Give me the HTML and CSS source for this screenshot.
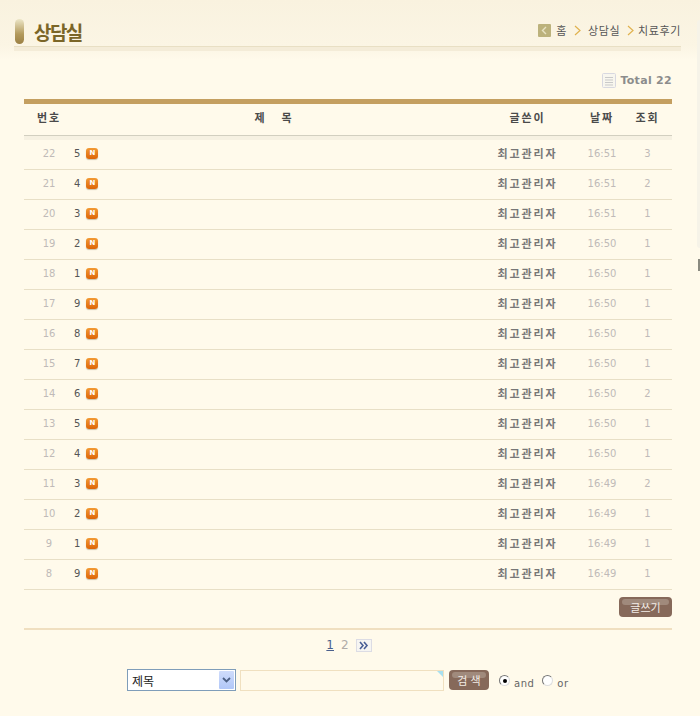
FILE: index.html
```html
<!DOCTYPE html>
<html lang="ko">
<head>
<meta charset="utf-8">
<title>상담실</title>
<link rel="stylesheet" href="styles.css">
</head>
<body>
<div class="page">
  <header class="head">
    <div class="head-left">
      <span class="pill"></span>
      <h1 class="title">상담실</h1>
    </div>
    <nav class="crumbs">
      <svg class="home" width="13" height="13" viewBox="0 0 13 13"><rect width="13" height="13" rx="1" fill="#bcb27c"/><path d="M8 3 L4.500 6.500 L8 10" fill="none" stroke="#e8e3c4" stroke-width="1.400"/></svg>
      <span class="crumb-home">홈</span>
      <svg class="chev" width="7" height="11" viewBox="0 0 7 11"><path d="M1 1 L6 5.500 L1 10" fill="none" stroke="#e0b24e" stroke-width="1.200"/></svg>
      <span class="crumb-mid">상담실</span>
      <svg class="chev" width="7" height="11" viewBox="0 0 7 11"><path d="M1 1 L6 5.500 L1 10" fill="none" stroke="#e0b24e" stroke-width="1.200"/></svg>
      <span class="crumb-last">치료후기</span>
    </nav>
  </header>
  <div class="head-rule"></div>

  <main class="board">
    <div class="total">
      <svg width="14" height="15" viewBox="0 0 14 15"><rect x="0.500" y="0.500" width="13" height="14" rx="1" fill="#f8f6ee" stroke="#d8d8e0"/><path d="M3 4.500h8M3 7h8M3 9.500h8M3 12h8" stroke="#c9c9c9"/></svg>
      <span class="total-text">Total 22</span>
    </div>
    <div class="thead">
      <span class="c-no">번호</span>
      <span class="c-title">제&nbsp;&nbsp;&nbsp;목</span>
      <span class="c-author">글쓴이</span>
      <span class="c-date">날짜</span>
      <span class="c-hit">조회</span>
    </div>
    <div class="tband"></div>
    <div class="rows" id="rows"></div>
    <div class="actions"><a class="btn btn-write"><span class="btn-label">글쓰기</span></a></div>
    <div class="foot-rule"></div>
    <div class="pager">
      <span class="pg-cur">1</span>
      <span class="pg">2</span>
      <svg class="pg-next" width="16" height="13" viewBox="0 0 16 13"><rect x="0.500" y="0.500" width="15" height="12" fill="#f6f5f2" stroke="#dcdce4"/><path d="M4 3l3 3.500-3 3.500M8 3l3 3.500-3 3.500" fill="none" stroke="#4a5f96" stroke-width="1.600"/></svg>
    </div>
    <form class="search">
      <div class="select">
        <span class="select-text">제목</span>
        <span class="select-arrow"><svg width="9" height="6" viewBox="0 0 9 6"><path d="M1 1l3.500 3.500L8 1" fill="none" stroke="#4d6185" stroke-width="1.800"/></svg></span>
      </div>
      <div class="input"><span class="corner"></span></div>
      <a class="btn btn-search"><span class="btn-label">검 색</span></a>
      <label class="radio"><span class="dot on"></span><span class="radio-text">and</span></label>
      <label class="radio"><span class="dot"></span><span class="radio-text">or</span></label>
    </form>
  </main>
  <div class="edge"></div>
  <div class="edge-tick"></div>
</div>
<script src="rows.js"></script>
</body>
</html>
```
FILE: rows.js
```js
var data = [
  [22,5,"16:51",3],[21,4,"16:51",2],[20,3,"16:51",1],[19,2,"16:50",1],[18,1,"16:50",1],
  [17,9,"16:50",1],[16,8,"16:50",1],[15,7,"16:50",1],[14,6,"16:50",2],[13,5,"16:50",1],
  [12,4,"16:50",1],[11,3,"16:49",2],[10,2,"16:49",1],[9,1,"16:49",1],[8,9,"16:49",1]
];
document.getElementById("rows").innerHTML = data.map(function (r) {
  return '<div class="row">' +
    '<span class="c-no num">' + r[0] + '</span>' +
    '<span class="c-title subject"><span class="subj">' + r[1] + '</span><span class="badge">N</span></span>' +
    '<span class="c-author who">최고관리자</span>' +
    '<span class="c-date num">' + r[2] + '</span>' +
    '<span class="c-hit num">' + r[3] + '</span>' +
    '</div>';
}).join("");
```
FILE: styles.css
```css
html, body { margin: 0; padding: 0; }
body {
  background: #fffaeb;
  font-family: "Liberation Sans", "Noto Sans CJK KR", sans-serif;
  font-size: 11px;
  color: #555;
}
.page {
  position: relative;
  width: 700px;
  height: 716px;
  overflow: hidden;
  background: linear-gradient(#f9f2df 0, #fbf5e4 46px, #fffaeb 60px);
}
.head {
  display: flex;
  justify-content: space-between;
  align-items: center;
  box-sizing: border-box;
  height: 46px;
  padding: 18px 20px 1px 15px;
}
.head-left { display: flex; align-items: center; gap: 10px; }
.pill {
  width: 9px;
  height: 25px;
  border-radius: 5px;
  background: linear-gradient(#ece6c8, #b39a5c 60%, #9b8044);
}
.title {
  margin: 0;
  font-size: 19px;
  font-weight: 700;
  letter-spacing: -1.600px;
  color: #7b6628;
  font-family: "Noto Sans CJK KR", sans-serif;
  line-height: 25px;
}
.crumbs {
  display: flex;
  align-items: center;
  margin-bottom: 3px;
  font-size: 11px;
  letter-spacing: 0.600px;
  color: #555;
  font-family: "Noto Sans CJK KR", sans-serif;
}
.crumb-home { margin-left: 5px; }
.crumbs .chev { margin-left: 7px; }
.crumb-mid { margin-left: 7px; }
.crumb-last { margin-left: 4px; margin-right: -1px; }
.head-rule {
  margin-left: 14px;
  width: 667px;
  height: 5px;
  box-sizing: border-box;
  border-top: 1px solid #e8dfc4;
  background: #f4ecd8;
}
.board { padding: 0 28px 0 24px; }
.total {
  display: flex;
  justify-content: flex-end;
  align-items: center;
  gap: 4px;
  height: 48px;
  padding-top: 11px;
  box-sizing: border-box;
}
.total-text {
  font-family: "DejaVu Sans", sans-serif;
  font-size: 11px;
  font-weight: 700;
  letter-spacing: 0.300px;
  color: #8c8c8c;
}
.thead {
  display: flex;
  align-items: center;
  box-sizing: border-box;
  height: 37px;
  padding-bottom: 6px;
  border-top: 5px solid #c49f60;
  border-bottom: 1px solid #d2cfc0;
  font-family: "Noto Sans CJK KR", sans-serif;
  font-size: 11px;
  font-weight: 700;
  color: #4a4a4a;
  letter-spacing: 1.900px;
}
.tband { height: 4px; background: #f6f1e2; }
.row {
  display: flex;
  align-items: center;
  box-sizing: border-box;
  height: 30px;
  padding-bottom: 2px;
  border-bottom: 1px solid #e8dfc6;
}
.c-no { width: 50px; text-align: center; flex: none; }
.c-title { flex: 1; text-align: center; }
.c-author { width: 107px; text-align: center; flex: none; }
.c-date { width: 42px; text-align: center; flex: none; }
.c-hit { width: 49px; text-align: center; flex: none; }
.num {
  font-family: "DejaVu Sans", sans-serif;
  font-size: 10px;
  color: #c0bab8;
}
.subject {
  display: flex;
  align-items: center;
  font-family: "DejaVu Sans", sans-serif;
  font-size: 10px;
  color: #555;
}
.badge {
  display: inline-block;
  width: 12px;
  height: 11px;
  margin-left: 6px;
  border-radius: 3px;
  background: linear-gradient(#f29a34, #dd6406);
  box-shadow: 0 1px 1px #c9c0a8;
  color: #fff;
  font: 700 7px/11px "DejaVu Sans", sans-serif;
  text-align: center;
}
.who {
  margin-bottom: 2px;
  font-family: "Noto Sans CJK KR", sans-serif;
  font-size: 11px;
  font-weight: 700;
  letter-spacing: 1.900px;
  color: #777;
}
.actions {
  display: flex;
  justify-content: flex-end;
  padding-top: 7px;
  height: 31px;
  box-sizing: border-box;
}
.btn {
  position: relative;
  display: flex;
  align-items: center;
  justify-content: center;
  box-sizing: border-box;
  border-radius: 4px;
  background: #86695a;
  color: #f2ece6;
  font-family: "Noto Sans CJK KR", sans-serif;
  font-size: 11px;
  height: 20px;
}
.btn::before {
  content: "";
  position: absolute;
  left: 3px;
  right: 3px;
  top: 2px;
  height: 6px;
  border-radius: 3px;
  background: #a08a7c;
}
.btn-label { position: relative; }
.btn-write { width: 53px; }
.btn-search { width: 40px; margin-top: 1px; margin-right: 10px; }
.foot-rule { height: 2px; background: #f0dfc0; margin-top: 7px; }
.pager {
  display: flex;
  justify-content: center;
  align-items: center;
  gap: 7px;
  height: 30px;
  padding-left: 2px;
  font-family: "DejaVu Sans", sans-serif;
  font-size: 12px;
}
.pg-cur { color: #4a5f8c; text-decoration: underline; }
.pg { color: #b0aca8; }
.search {
  display: flex;
  align-items: flex-start;
  margin-top: 9px;
  padding-left: 103px;
}
.select {
  display: flex;
  align-items: center;
  justify-content: space-between;
  box-sizing: border-box;
  width: 109px;
  height: 22px;
  border: 1px solid #7f9db9;
  background: #fff;
  padding: 1px;
  margin-right: 4px;
}
.select-text {
  font-family: "Noto Sans CJK KR", sans-serif;
  font-size: 12px;
  color: #222;
  padding-left: 3px;
}
.select-arrow {
  display: flex;
  align-items: center;
  justify-content: center;
  width: 15px;
  height: 18px;
  border-radius: 1px;
  background: linear-gradient(#cfdcfb, #b1c7f8);
}
.input {
  position: relative;
  box-sizing: border-box;
  width: 204px;
  height: 21px;
  margin-top: 1px;
  margin-right: 5px;
  border: 1px solid #f0e0c0;
}
.corner {
  position: absolute;
  top: 0;
  right: 0;
  width: 0;
  height: 0;
  border-top: 6px solid #a8e0f0;
  border-left: 6px solid transparent;
}
.radio { display: flex; align-items: flex-start; margin-right: 8px; }
.dot {
  display: block;
  position: relative;
  box-sizing: border-box;
  width: 11px;
  height: 11px;
  margin-top: 6px;
  border-radius: 50%;
  border: 1px solid #777;
  border-right-color: #ddd;
  border-bottom-color: #ddd;
  background: #fff;
}
.dot.on::after {
  content: "";
  position: absolute;
  left: 2.500px;
  top: 2.500px;
  width: 4px;
  height: 4px;
  border-radius: 50%;
  background: #000;
}
.radio-text {
  margin-left: 4px;
  margin-top: 9px;
  font-family: "DejaVu Sans", sans-serif;
  font-size: 10px;
  letter-spacing: 0.500px;
  color: #666;
}
.edge {
  position: absolute;
  top: 20px;
  right: 0;
  width: 3px;
  height: 228px;
  background: #f6f3e8;
  border-radius: 3px 0 0 3px;
}
.edge-tick {
  position: absolute;
  top: 259px;
  right: 0;
  width: 2px;
  height: 12px;
  background: #8a8a80;
}
```
